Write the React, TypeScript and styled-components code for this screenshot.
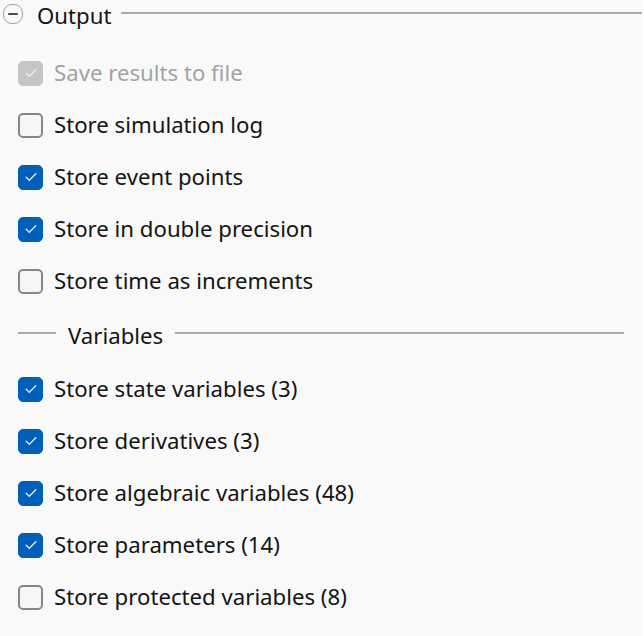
import React from "react";
import styled, { createGlobalStyle } from "styled-components";

const Global = createGlobalStyle`
  html, body { margin: 0; padding: 0; background: #fcfcfc; }
  body { font-family: "Noto Sans", "Open Sans", sans-serif; }
`;

const Panel = styled.div`
  width: 642px;
  height: 636px;
  background: #f9f9f9;
  display: flex;
  flex-direction: column;
  box-sizing: border-box;
`;

const GroupHeader = styled.div`
  height: 30px;
  display: flex;
  align-items: center;
  padding-left: 3px;
`;

const CollapseButton = styled.div`
  width: 20px;
  height: 20px;
  box-sizing: border-box;
  border: 1.5px solid #a3a3a3;
  border-radius: 9px;
  display: flex;
  align-items: center;
  justify-content: center;
  margin-right: 14px;
  margin-top: -2px;
  &::after {
    content: "";
    width: 10px;
    height: 2px;
    background: #4a4a4a;
    border-radius: 1px;
  }
`;

const HeaderLabel = styled.span`
  font-size: 22.2px;
  color: #141414;
  margin-right: 10px;
`;

const Rule = styled.div<{ $width?: number }>`
  height: 2px;
  background: #a9a9a9;
  flex: ${(p) => (p.$width ? `0 0 ${p.$width}px` : "1")};
  margin-top: -4px;
`;

const List = styled.div`
  display: flex;
  flex-direction: column;
  margin-top: 17px;
`;

const Row = styled.label<{ $disabled?: boolean }>`
  height: 52px;
  display: flex;
  align-items: center;
  padding-left: 18px;
  gap: 11px;
  font-size: 22.2px;
  color: ${(p) => (p.$disabled ? "#a3a3a3" : "#141414")};
`;

const RowText = styled.span`
  margin-top: -2px;
`;

const Box = styled.span<{ $checked?: boolean; $disabled?: boolean }>`
  width: 25px;
  height: 25px;
  box-sizing: border-box;
  border-radius: 5px;
  display: flex;
  align-items: center;
  justify-content: center;
  flex: none;
  background: ${(p) =>
    p.$disabled ? "#c5c5c5" : p.$checked ? "#005fb8" : "#f6f6f6"};
  border: ${(p) =>
    p.$disabled
      ? "1px solid #c5c5c5"
      : p.$checked
      ? "1px solid #005fb8"
      : "2px solid #868686"};
`;

const SubHeader = styled.div`
  height: 56px;
  display: flex;
  align-items: center;
  padding-left: 18px;
  padding-right: 18px;
  gap: 12px;
  font-size: 22.2px;
  color: #141414;
`;

const Check = () => (
  <svg width="12" height="10" viewBox="0 0 12 10" fill="none">
    <path
      d="M1.2 5.2 L4.3 8.2 L10.8 1.8"
      stroke="#e8f0fa"
      strokeWidth="1.3"
      strokeLinecap="round"
      strokeLinejoin="round"
    />
  </svg>
);

type Opt = { label: string; checked: boolean; disabled?: boolean };

const Option = ({ label, checked, disabled }: Opt) => (
  <Row $disabled={disabled}>
    <Box $checked={checked} $disabled={disabled}>
      {checked && <Check />}
    </Box>
    <RowText>{label}</RowText>
  </Row>
);

const outputOpts: Opt[] = [
  { label: "Save results to file", checked: true, disabled: true },
  { label: "Store simulation log", checked: false },
  { label: "Store event points", checked: true },
  { label: "Store in double precision", checked: true },
  { label: "Store time as increments", checked: false },
];

const varOpts: Opt[] = [
  { label: "Store state variables (3)", checked: true },
  { label: "Store derivatives (3)", checked: true },
  { label: "Store algebraic variables (48)", checked: true },
  { label: "Store parameters (14)", checked: true },
  { label: "Store protected variables (8)", checked: false },
];

export default function App() {
  return (
    <>
      <Global />
      <Panel>
        <GroupHeader>
          <CollapseButton />
          <HeaderLabel>Output</HeaderLabel>
          <Rule />
        </GroupHeader>
        <List>
          {outputOpts.map((o) => (
            <Option key={o.label} {...o} />
          ))}
          <SubHeader>
            <Rule $width={38} />
            <span>Variables</span>
            <Rule />
          </SubHeader>
          {varOpts.map((o) => (
            <Option key={o.label} {...o} />
          ))}
        </List>
      </Panel>
    </>
  );
}
